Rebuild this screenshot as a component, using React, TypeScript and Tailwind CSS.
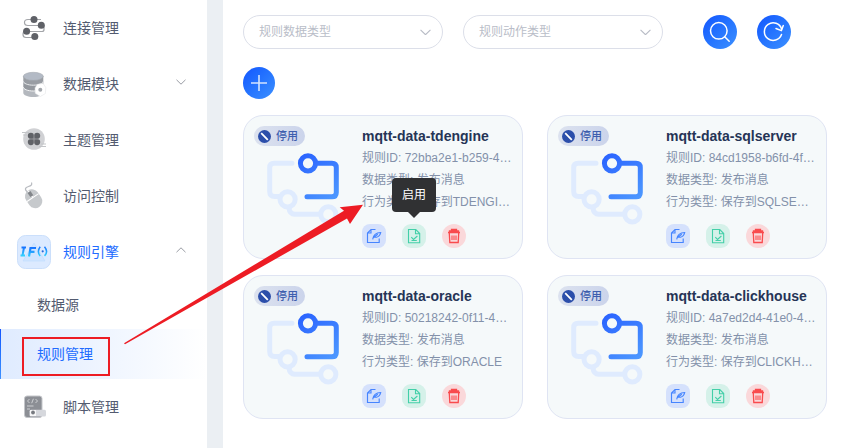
import React from "react";

const FONT = "font-['Liberation_Sans','Noto_Sans_CJK_SC',sans-serif]";

function Chevron({ up, className, w = 10 }: { up?: boolean; className: string; w?: number }) {
  return (
    <svg className={className} width={w} height={w * 0.6} viewBox="0 0 10 6" fill="none" stroke="currentColor" strokeWidth="1">
      <path d={up ? "M.5 5.2 5 .8l4.5 4.4" : "M.5 .8 5 5.2 9.500 .8"} />
    </svg>
  );
}

function ConnectIcon() {
  return (
    <svg width="34" height="34" viewBox="0 0 34 34">
      <g fill="none" stroke="#a3a5a9" strokeWidth="1.2">
        <path d="M24 8.500H11q-3.500 0-3.500 3t3.500 3h10" />
        <path d="M27 14.500v4q0 2-2 2H8.500q-2.500 0-2.500 3t3 3h8" />
      </g>
      <g fill="#5f6167">
        <circle cx="17" cy="8.600" r="3.500" />
        <circle cx="24.300" cy="14.200" r="3.500" />
        <circle cx="9.600" cy="20.200" r="3.500" />
        <circle cx="17.800" cy="25.500" r="3.500" />
      </g>
    </svg>
  );
}

function DatabaseIcon() {
  return (
    <svg width="34" height="34" viewBox="0 0 34 34">
      <path d="M6.300 21v5c0 2.200 4.500 4 10 4s10-1.800 10-4v-5z" fill="#b4b8be" />
      <path d="M6.300 14v6c0 2.200 4.500 4 10 4s10-1.800 10-4v-6z" fill="#94989e" />
      <path d="M6.300 20c0 2.200 4.500 4 10 4s10-1.800 10-4" fill="none" stroke="#f3f4f5" strokeWidth="1" />
      <path d="M6.300 9v5.200c0 2.200 4.500 4 10 4s10-1.800 10-4V9z" fill="#999da3" />
      <path d="M6.300 14.200c0 2.200 4.500 4 10 4s10-1.800 10-4" fill="none" stroke="#e8eaec" strokeWidth="1" />
      <ellipse cx="16.300" cy="9.300" rx="10" ry="4" fill="#b3bac5" stroke="#a1a5ab" strokeWidth=".5" />
      <path d="m20.500 17.300 5.500-1 2.800 4.200-.4 6-5 3-5.200-3.200-.2-5.500z" fill="#fff" stroke="#dfe0e2" strokeWidth=".5" />
      <circle cx="23.300" cy="22.700" r="2" fill="#a3a7ac" />
    </svg>
  );
}

function TopicIcon() {
  return (
    <svg width="34" height="34" viewBox="0 0 34 34">
      <circle cx="17" cy="16" r="10.800" fill="#d0d1d4" />
      <path d="M5 9.500h7M6 12h4M22 23.500h7M24 21h5" stroke="#c3c5c8" strokeWidth="1" />
      <path d="M14 12h6v8h-6z" fill="#77797d" />
      <g fill="#606267">
        <circle cx="13.900" cy="12.800" r="3.100" />
        <circle cx="20.100" cy="12.800" r="3.100" />
        <circle cx="13.900" cy="19.100" r="3.100" />
        <circle cx="20.100" cy="19.100" r="3.100" />
      </g>
      <path d="M17 11v10M12 16h10" stroke="#999b9f" strokeWidth=".8" />
    </svg>
  );
}

function MouseIcon() {
  return (
    <svg width="34" height="34" viewBox="0 0 34 34">
      <path d="M14.500 3.500c2 5-7 3-6 7 .4 1.500 2 2 2.700 4" fill="none" stroke="#b8bbc0" strokeWidth="1.200" />
      <g transform="rotate(-34 16.800 20)">
        <rect x="9.800" y="9.700" width="14" height="20" rx="7" fill="#c6c9cc" />
        <path d="M9.800 18.300h14M16.800 10v8" stroke="#fff" strokeWidth="1" />
        <path d="M15 11.500h3.500v5H15z" rx="1" fill="#83868a" />
      </g>
    </svg>
  );
}

function RuleIcon() {
  return (
    <svg width="34" height="34" viewBox="0 0 34 34">
      <defs>
        <linearGradient id="if" x1="0" y1="0" x2="0" y2="1">
          <stop stopColor="#1976ff" />
          <stop offset="1" stopColor="#32cfff" />
        </linearGradient>
      </defs>
      <rect x=".5" y=".5" width="33" height="33" rx="8" fill="#dceaff" stroke="#cbdffb" />
      <path d="m17 8 11 18H6z" fill="#d1e5ff" stroke="#bddbff" strokeWidth=".6" />
      <g fill="none" stroke="url(#if)" strokeWidth="2">
        <path d="M4.500 12.500h4.500M3.500 20.500H8M7 12.500 5.500 20.500" />
        <path d="M19 13h-5.500L12 21.500M12.500 16.800h5" strokeWidth="2.200" />
        <path d="M23.200 11.700q-3.700 5 0 9.200M27.500 11.700q4.200 5 0 9.200" strokeWidth="1.500" />
      </g>
      <circle cx="25.700" cy="16.300" r="1.100" fill="#2869dc" />
    </svg>
  );
}

function ScriptIcon() {
  return (
    <svg width="34" height="34" viewBox="0 0 34 34">
      <rect x="7.500" y="6" width="17.500" height="21.500" rx="2.500" fill="#8c8f95" stroke="#c4c6ca" strokeWidth="1" />
      <path d="m12.500 9-2 2 2 2m6-4 2 2-2 2M16.400 8.800l-1.700 4.400M10 16h6.500M10 19h3" fill="none" stroke="#ced0d3" strokeWidth="1" />
      <rect x="12.500" y="19.800" width="16.500" height="6.700" rx="1.500" fill="#d6d8dd" />
      <path d="M13 20h6v6h-6z" fill="#f7f7f8" />
      <circle cx="16" cy="22.500" r="1.900" fill="#777a80" />
    </svg>
  );
}

function MenuItem({ icon, label, active, arrow }: { icon: React.ReactNode; label: string; active?: boolean; arrow?: "up" | "down" }) {
  return (
    <div className={`flex h-14 shrink-0 items-center pl-[17px] pr-[21px] text-sm ${active ? "text-[#216bff]" : "text-[#535b70]"}`}>
      {icon}
      <span className="ml-3 flex-1">{label}</span>
      {arrow && <Chevron up={arrow === "up"} className="mb-[5px] text-[#999ca4]" />}
    </div>
  );
}

function Select({ label }: { label: string }) {
  return (
    <div className="flex h-[34px] w-[200px] items-center justify-between rounded-full border border-[#dcdfe9] pl-[15px] pr-[11px] text-xs text-[#b9bdc8]">
      <span>{label}</span>
      <Chevron className="text-[#b7bbc5]" w={11} />
    </div>
  );
}

function FlowArt() {
  return (
    <svg width="80" height="84" viewBox="20 40 80 84" fill="none" strokeWidth="5" strokeLinecap="round" strokeLinejoin="round" className="mt-[3px] ml-[9px]">
      <defs>
        <linearGradient id="flow" gradientUnits="userSpaceOnUse" x1="55" y1="44" x2="90" y2="91">
          <stop stopColor="#2860ff" />
          <stop offset="1" stopColor="#4d98ff" />
        </linearGradient>
      </defs>
      <g stroke="#dfebfe">
        <path d="M49 54.300H31q-4.300 0-4.300 4.300v24q0 5 5 5h5" />
        <circle cx="44.600" cy="90.300" r="7.600" />
        <path d="M46 99q.5 6 6 6.300h25" />
        <circle cx="85.300" cy="105.300" r="7.600" />
      </g>
      <g stroke="url(#flow)">
        <circle cx="65" cy="54.300" r="7.600" />
        <path d="M74 54.300h15q4.300 0 4.300 4.300v24.800q0 4.300-4.300 4.300H64" />
      </g>
    </svg>
  );
}

function EditIcon() {
  return (
    <svg width="16" height="16" viewBox="0 0 16 16" fill="none" stroke="#4685ff" strokeWidth="1.150">
      <path d="M9.500 1.500H5L1.500 5v9.500h11.700V10.500M5 1.500V5H1.500" />
      <path d="M6.700 11.300C7.300 6.800 9.600 4.600 14.700 4.500c-.4 2-1.800 4.200-4.200 4.700H8.200M7.500 9.500l4.300-3.300" />
    </svg>
  );
}

function EnableIcon() {
  return (
    <svg width="16" height="16" viewBox="0 0 16 16" fill="none" stroke="#43cfa8" strokeWidth="1.100">
      <path d="M2.500 1.500h7.300l3.900 4v9.200H2.500zM9.500 1.700v4h4" />
      <path d="m5.300 9.200 2.200 2.300L11.400 8M5.500 12.500h5.300" />
    </svg>
  );
}

function TrashIcon() {
  return (
    <svg width="16" height="16" viewBox="0 0 16 16" fill="none" stroke="#f94a4d" strokeWidth="1.300">
      <path d="M2 4.500h12M3.500 4.500V3h9v1.500M5.500 2.800V1.500h5v1.300M3.300 5l.5 9.500h8.400l.5-9.500" />
      <path d="M6 7.500V12M8 7.500V12M10 7.500V12" strokeWidth="1.100" />
    </svg>
  );
}

function Card({ name, id, action, tip }: { name: string; id: string; action: string; tip?: boolean }) {
  return (
    <div className="flex h-36 w-[280px] rounded-[20px] border border-[#dfe4f3] bg-[#f5f9fa] pl-2.5 pt-2.5">
      <div className="w-[108px] shrink-0">
        <div className="flex h-5 w-[51px] items-center gap-[5px] rounded-full bg-linear-to-r from-[#dce2ef] to-[#cbd4eb] pl-1 text-[11px] text-[#3e5eae]">
          <svg width="13" height="13" viewBox="0 0 13 13">
            <circle cx="6.500" cy="6.500" r="6.500" fill="#2b4eaa" />
            <path d="m3.200 3.200 6.600 6.600" stroke="#fff" strokeWidth="1.800" />
          </svg>
          <span className="whitespace-nowrap font-medium leading-5">停用</span>
        </div>
        <FlowArt />
      </div>
      <div className="-mt-px text-xs leading-[22px] whitespace-nowrap text-[#8391aa]">
        <div className="text-sm leading-[22px] font-bold text-[#253456]">{name}</div>
        <div>规则ID: {id}…</div>
        <div>数据类型: 发布消息</div>
        <div>行为类型: 保存到{action}</div>
        <div className="mt-[11px] flex gap-4">
          <div className="flex size-6 items-center justify-center rounded-[8px] bg-[#d5e1fc]"><EditIcon /></div>
          <div className="relative flex size-6 items-center justify-center rounded-[9px] bg-[#d5f1e9]">
            <EnableIcon />
            {tip && (
              <div className="absolute bottom-9 left-1/2 flex h-[34px] w-11 -translate-x-1/2 items-center justify-center rounded bg-[#303133] text-xs text-white">
                启用
                <svg className="absolute top-full" width="12" height="6" viewBox="0 0 12 6"><path d="M0 0h12L6 6z" fill="#303133" /></svg>
              </div>
            )}
          </div>
          <div className="flex size-6 items-center justify-center rounded-full bg-[#fad8da]"><TrashIcon /></div>
        </div>
      </div>
    </div>
  );
}

const blue = "flex items-center justify-center rounded-full bg-linear-to-br from-[#1554ff] to-[#3d90ff]";

export default function App() {
  return (
    <div className={`relative flex h-[448px] w-[842px] overflow-hidden bg-[#ebeff3] ${FONT}`}>
      <aside className="flex w-[207px] shrink-0 flex-col bg-white">
        <MenuItem icon={<ConnectIcon />} label="连接管理" />
        <MenuItem icon={<DatabaseIcon />} label="数据模块" arrow="down" />
        <MenuItem icon={<TopicIcon />} label="主题管理" />
        <MenuItem icon={<MouseIcon />} label="访问控制" />
        <MenuItem icon={<RuleIcon />} label="规则引擎" active arrow="up" />
        <div className="flex h-[49px] shrink-0 items-center pl-[37px] text-sm text-[#535b70]">数据源</div>
        <div className="relative flex h-[50px] shrink-0 items-center bg-linear-to-r from-[#dfebff] to-white pl-[37px] text-sm text-[#216bff]">
          <i className="absolute inset-y-0 left-0 w-px bg-linear-to-b from-[#1554ff] to-[#3d90ff]" />
          规则管理
          <i className="absolute top-2 left-[22px] h-[39px] w-[88px] border-2 border-[#ed1c24]" />
        </div>
        <MenuItem icon={<ScriptIcon />} label="脚本管理" />
      </aside>
      <main className="ml-4 flex-1 bg-white pt-[15px] pl-5">
        <div className="flex">
          <Select label="规则数据类型" />
          <div className="ml-5"><Select label="规则动作类型" /></div>
          <button className={`${blue} ml-10 size-[34px]`}>
            <svg width="22" height="22" viewBox="0 0 22 22" fill="none" stroke="#fff" strokeWidth="1.500" strokeLinecap="round">
              <circle cx="9.800" cy="9.800" r="8.300" />
              <path d="m15.700 15.700 4.500 4.500" />
            </svg>
          </button>
          <button className={`${blue} ml-5 size-[34px]`}>
            <svg width="22" height="22" viewBox="0 0 22 22" fill="none" stroke="#fff" strokeWidth="1.500" strokeLinecap="round" strokeLinejoin="round">
              <path d="M18.500 13.500a8.800 8.800 0 1 1 .1-5.500" />
              <path d="m13 7.500 5.400 2.100 1.900-5" />
            </svg>
          </button>
        </div>
        <button className={`${blue} mt-[18px] size-8`}>
          <svg width="16" height="16" viewBox="0 0 16 16" stroke="#d3e4ff" strokeWidth="1.600"><path d="M8 0v16M0 8h16" /></svg>
        </button>
        <div className="mt-4 grid w-[584px] grid-cols-2 gap-x-6 gap-y-4">
          <Card name="mqtt-data-tdengine" id="72bba2e1-b259-4" action="TDENGI…" tip />
          <Card name="mqtt-data-sqlserver" id="84cd1958-b6fd-4f" action="SQLSE…" />
          <Card name="mqtt-data-oracle" id="50218242-0f11-4" action="ORACLE" />
          <Card name="mqtt-data-clickhouse" id="4a7ed2d4-41e0-4" action="CLICKH…" />
        </div>
      </main>
      <svg className="pointer-events-none absolute inset-0" width="842" height="448" viewBox="0 0 842 448">
        <path d="M124 343.300 344 210.800 339.700 207.300 363 204.800 350 224 347 218.500 125 344.300z" fill="#ed1c24" />
      </svg>
    </div>
  );
}
